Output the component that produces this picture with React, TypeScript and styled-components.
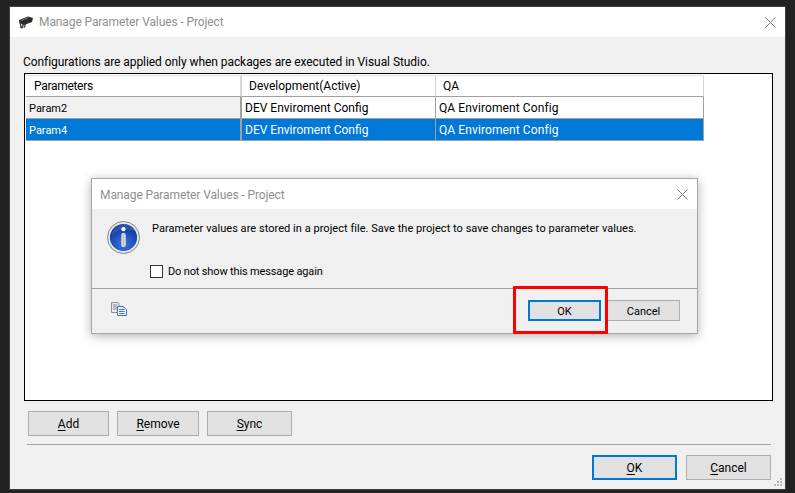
import React from 'react';
import styled, { createGlobalStyle } from 'styled-components';

const GlobalStyle = createGlobalStyle`
  html, body {
    margin: 0;
    padding: 0;
    background: #222222;
    overflow: hidden;
  }
  * {
    box-sizing: border-box;
  }
`;

const Page = styled.div`
  width: 795px;
  height: 493px;
  padding: 6px 9px 3px 9px;
  background: #222222;
  font-family: Roboto, 'Noto Sans', sans-serif;
  font-size: 12px;
  color: #000;
`;

const Window = styled.div`
  position: relative;
  width: 777px;
  height: 484px;
  border: 1px solid #404040;
  background: #f0f0f0;
  display: flex;
  flex-direction: column;
`;

const TitleBar = styled.div`
  height: 30px;
  flex: none;
  background: #fff;
  display: flex;
  align-items: center;
  padding: 0 9px 0 8px;
  gap: 5px;
  color: #8f8f8f;
`;

const TitleText = styled.span`
  flex: 1;
  letter-spacing: -0.1px;
`;

const Content = styled.div`
  flex: 1;
  display: flex;
  flex-direction: column;
  padding: 17px 14px 9px 14px;
`;

const Hint = styled.div`
  height: 19px;
  line-height: 17px;
  margin-left: -1px;
  letter-spacing: -0.06px;
`;

const GridBox = styled.div`
  height: 328px;
  width: 749px;
  border: 1px solid #000;
  background: #fff;
  padding: 1px;
`;

const Row = styled.div`
  display: grid;
  grid-template-columns: 216px 194px 268px;
  height: 22px;
  width: 678px;
`;

const BodyRow = styled(Row)`
  & > :nth-child(3) {
    letter-spacing: 0.1px;
  }
`;

const Cell = styled.div<{ $head?: boolean; $selected?: boolean; $first?: boolean }>`
  display: flex;
  align-items: center;
  padding-left: ${({ $head, $first }) => ($head ? ($first ? '8px' : '7px') : '3px')};
  padding-top: ${({ $head, $first }) => (!$head && $first ? '1px' : '0')};
  font-size: ${({ $head, $first }) => (!$head && $first ? '11px' : '12px')};
  letter-spacing: ${({ $head, $first }) => ($head && $first ? '-0.3px' : '0')};
  background: ${({ $selected, $first }) => ($selected ? '#0078d7' : $first ? '#f0f0f0' : '#fff')};
  color: ${({ $selected }) => ($selected ? '#fff' : '#000')};
  border-bottom: 1px solid #a0a0a0;
  border-right: ${({ $first }) => ($first ? '2px solid #a0a0a0' : '1px solid #a0a0a0')};
  ${({ $head, $first }) => ($head ? `background: #fff; border-top: 1px solid #e3e3e3; border-right: ${$first ? '2px solid #d8d8d8' : '1px solid #d8d8d8'};` : '')}
`;

const ButtonRow = styled.div`
  display: flex;
  gap: 8px;
  margin: 10px 0 0 4px;
`;

const Btn = styled.button<{ $w: number; $h?: number; $primary?: boolean; $small?: boolean }>`
  width: ${({ $w }) => $w}px;
  height: ${({ $h }) => $h ?? 25}px;
  padding: ${({ $small }) => ($small ? '1px 0 0' : '0')};
  font-family: inherit;
  font-size: ${({ $small }) => ($small ? '11px' : '12px')};
  color: #000;
  background: #e1e1e1;
  border: ${({ $primary }) => ($primary ? '2px solid #0078d7' : '1px solid #adadad')};
  border-radius: 0;
`;

const Key = styled.span`
  text-decoration: underline;
  text-underline-offset: 2px;
`;

const Separator = styled.div`
  height: 1px;
  background: #a0a0a0;
  margin: 8px 0 0 3px;
  width: 744px;
`;

const FooterRow = styled.div`
  display: flex;
  justify-content: flex-end;
  gap: 9px;
  margin: 10px 0 0 0;
`;

const Grip = styled.svg`
  position: absolute;
  right: 2px;
  bottom: 2px;
`;

const Modal = styled.div`
  position: absolute;
  left: 81px;
  top: 171px;
  width: 607px;
  height: 156px;
  background: #f0f0f0;
  border: 1px solid #a6a6a6;
  box-shadow: 0 2px 10px rgba(0, 0, 0, 0.3);
  display: flex;
  flex-direction: column;
`;

const ModalTitle = styled.div`
  height: 30px;
  flex: none;
  background: #fff;
  color: #8f8f8f;
  display: flex;
  align-items: center;
  justify-content: space-between;
  padding: 1px 9px 0 8px;
  letter-spacing: -0.1px;
`;

const ModalBody = styled.div`
  height: 80px;
  flex: none;
  border-bottom: 1px solid #a0a0a0;
  display: flex;
  padding: 12px 0 0 15px;
  gap: 12px;
  font-size: 11px;
`;

const MessageColumn = styled.div`
  display: flex;
  flex-direction: column;
  gap: 26px;
`;

const Message = styled.div`
  height: 16px;
  line-height: 16px;
  white-space: nowrap;
  letter-spacing: 0.04px;
`;

const CheckRow = styled.label`
  display: flex;
  align-items: center;
  gap: 5px;
  height: 16px;
  margin-left: -2px;
  letter-spacing: -0.15px;
`;

const CheckBox = styled.span`
  width: 13px;
  height: 13px;
  background: #fff;
  border: 1px solid #333;
`;

const ModalFooter = styled.div`
  flex: 1;
  display: flex;
  align-items: flex-start;
  justify-content: space-between;
  padding: 11px 17px 0 19px;
`;

const CopyWrap = styled.div`
  padding-top: 2px;
`;

const ModalButtons = styled.div`
  display: flex;
  gap: 6px;
`;

const Highlight = styled.div`
  position: absolute;
  left: 421px;
  top: 107px;
  width: 95px;
  height: 48px;
  border: 3px solid #ff0000;
  border-radius: 1px;
  pointer-events: none;
`;

const InfoSvg = styled.svg`
  flex: none;
`;

const CloseIcon = ({ size = 11 }: { size?: number }) => (
  <svg width={size} height={size} viewBox="0 0 11 11">
    <path d="M0.5 0.5L10.5 10.5M10.5 0.5L0.5 10.5" stroke="#7a7a7a" strokeWidth="1" fill="none" />
  </svg>
);

const ToolIcon = () => (
  <svg width="16" height="14" viewBox="0 0 16 14">
    <path d="M1 5L10 1.5L15 3L14 7L6 10L1.5 8Z" fill="#2b2b2b" />
    <path d="M2 6.5L3 12.5H4.5L5 9L7 9.5L6.5 12.5" fill="none" stroke="#3a3a3a" strokeWidth="1.4" />
    <path d="M3 5.5L10 2.8" stroke="#8a8a8a" strokeWidth="0.8" />
  </svg>
);

const InfoIcon = () => (
  <InfoSvg width="33" height="33" viewBox="0 0 33 33">
    <defs>
      <radialGradient id="blue" cx="50%" cy="75%" r="70%">
        <stop offset="0%" stopColor="#3f74dc" />
        <stop offset="60%" stopColor="#1f4fb8" />
        <stop offset="100%" stopColor="#15338a" />
      </radialGradient>
    </defs>
    <circle cx="16.5" cy="16.5" r="16" fill="#e8e8e8" stroke="#7d8590" strokeWidth="1" />
    <circle cx="16.5" cy="16.5" r="13.6" fill="url(#blue)" />
    <path d="M5 15C9 8 20 6 29 11C26 5 21 3 16.5 3C10 3 5.5 8 5 15Z" fill="#5b84dd" opacity="0.35" />
    <circle cx="16.5" cy="8.2" r="2.1" fill="#fff" />
    <rect x="14.3" y="12" width="4.4" height="14" rx="2" fill="#e6e6e6" />
    <rect x="15.6" y="13" width="1.6" height="12" fill="#b9b9b9" />
  </InfoSvg>
);

const CopyIcon = () => (
  <svg width="16" height="14" viewBox="0 0 16 14">
    <path d="M0.5 0.5H7L8 1.5V10.5H0.5Z" fill="#e8e8ee" stroke="#8e8e96" />
    <path d="M2 3H6M2 5H6M2 7H6" stroke="#8e8e96" />
    <path d="M6.5 4.5H12L15.5 7.5V13.5H6.5Z" fill="#f2f6fd" stroke="#3f6fd0" />
    <path d="M8 7.5H13.5M8 9.5H13.5M8 11.5H13.5" stroke="#3f6fd0" />
  </svg>
);

const GripIcon = () => (
  <Grip width="10" height="10" viewBox="0 0 10 10">
    <g fill="#b8b8b8">
      <rect x="7" y="1" width="2" height="2" />
      <rect x="4" y="4" width="2" height="2" />
      <rect x="7" y="4" width="2" height="2" />
      <rect x="1" y="7" width="2" height="2" />
      <rect x="4" y="7" width="2" height="2" />
      <rect x="7" y="7" width="2" height="2" />
    </g>
  </Grip>
);

const params = [
  { name: 'Param2', selected: false },
  { name: 'Param4', selected: true },
];

const App: React.FC = () => {
  return (
    <Page>
      <GlobalStyle />
      <Window>
        <TitleBar>
          <ToolIcon />
          <TitleText>Manage Parameter Values - Project</TitleText>
          <CloseIcon />
        </TitleBar>
        <Content>
          <Hint>Configurations are applied only when packages are executed in Visual Studio.</Hint>
          <GridBox>
            <Row>
              <Cell $head $first>Parameters</Cell>
              <Cell $head>Development(Active)</Cell>
              <Cell $head>QA</Cell>
            </Row>
            {params.map((p) => (
              <BodyRow key={p.name}>
                <Cell $first $selected={p.selected}>{p.name}</Cell>
                <Cell $selected={p.selected}>DEV Enviroment Config</Cell>
                <Cell $selected={p.selected}>QA Enviroment Config</Cell>
              </BodyRow>
            ))}
          </GridBox>
          <ButtonRow>
            <Btn $w={81}><Key>A</Key>dd</Btn>
            <Btn $w={82}><Key>R</Key>emove</Btn>
            <Btn $w={85}><Key>S</Key>ync</Btn>
          </ButtonRow>
          <Separator />
          <FooterRow>
            <Btn $w={85} $primary><Key>O</Key>K</Btn>
            <Btn $w={85}><Key>C</Key>ancel</Btn>
          </FooterRow>
        </Content>
        <GripIcon />
        <Modal>
          <ModalTitle>
            <span>Manage Parameter Values - Project</span>
            <CloseIcon />
          </ModalTitle>
          <ModalBody>
            <InfoIcon />
            <MessageColumn>
              <Message>Parameter values are stored in a project file. Save the project to save changes to parameter values.</Message>
              <CheckRow>
                <CheckBox />
                Do not show this message again
              </CheckRow>
            </MessageColumn>
          </ModalBody>
          <ModalFooter>
            <CopyWrap>
              <CopyIcon />
            </CopyWrap>
            <ModalButtons>
              <Btn $w={73} $h={21} $primary $small>OK</Btn>
              <Btn $w={73} $h={21} $small>Cancel</Btn>
            </ModalButtons>
          </ModalFooter>
          <Highlight />
        </Modal>
      </Window>
    </Page>
  );
};

export default App;
